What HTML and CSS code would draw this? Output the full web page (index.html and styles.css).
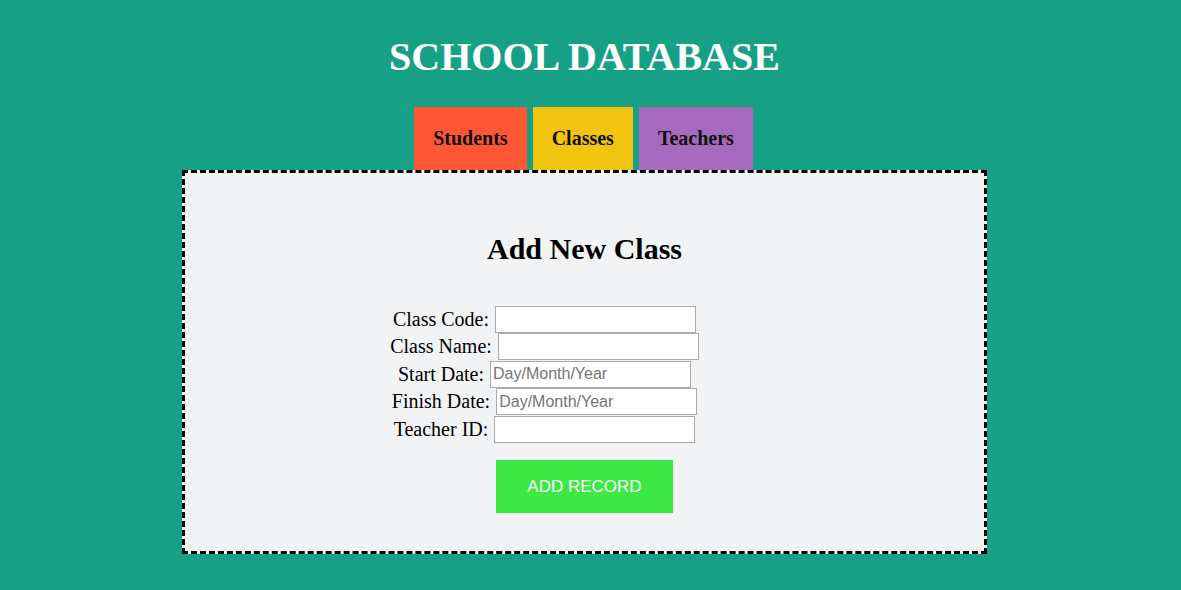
FILE: index.html
```html
<!DOCTYPE html>
<html>
<head>
<meta charset="utf-8">
<title>School Database</title>
<link rel="stylesheet" href="styles.css">
</head>
<body>
<div class="page">
  <h1 class="title">SCHOOL DATABASE</h1>
  <nav class="tabs">
    <a class="tab tab-students">Students</a>
    <a class="tab tab-classes">Classes</a>
    <a class="tab tab-teachers">Teachers</a>
  </nav>
  <section class="panel">
    <h2 class="panel-title">Add New Class</h2>
    <form class="form">
      <div class="row"><label>Class Code:</label><input type="text"></div>
      <div class="row"><label>Class Name:</label><input type="text"></div>
      <div class="row"><label>Start Date:</label><input type="text" placeholder="Day/Month/Year"></div>
      <div class="row"><label>Finish Date:</label><input type="text" placeholder="Day/Month/Year"></div>
      <div class="row"><label>Teacher ID:</label><input type="text"></div>
      <div class="actions"><button type="button" class="btn">ADD RECORD</button></div>
    </form>
  </section>
</div>
</body>
</html>
```
FILE: styles.css
```css
html, body {
  margin: 0;
  padding: 0;
}
body {
  background: #16a085;
  font-family: "Liberation Serif", "Times New Roman", serif;
  color: #000;
}
.page {
  padding-right: 12px;
}
.title {
  margin: 33px 0 27px;
  text-align: center;
  color: #fff;
  font-size: 40px;
  font-weight: bold;
}
.tabs {
  display: flex;
  justify-content: center;
  gap: 6px;
  padding-right: 2px;
}
.tab {
  display: block;
  padding: 20px 19px;
  font-size: 20px;
  font-weight: bold;
  color: #111;
}
.tab-students { background: #ff5733; }
.tab-classes { background: #f1c40f; }
.tab-teachers { background: #a569bd; }
.panel {
  box-sizing: border-box;
  width: 805px;
  margin: 0 auto;
  border: 3px dashed #000;
  background: #f2f3f4;
  padding: 37px 0 38px;
}
.panel-title {
  margin: 22px 0 39.5px;
  text-align: center;
  font-size: 30px;
  font-weight: bold;
}
.form {
  display: flex;
  flex-direction: column;
}
.row {
  display: flex;
  justify-content: center;
  align-items: center;
  gap: 6px;
  height: 27.5px;
  padding-right: 80px;
  font-size: 20px;
}
.row input {
  box-sizing: border-box;
  width: 201px;
  height: 27px;
  margin: 0;
  padding: 1px 2px;
  border: 1px solid #ababab;
  background: #fff;
  font-family: "Liberation Sans", Arial, sans-serif;
  font-size: 16px;
}
.row input::placeholder {
  color: #757575;
}
.actions {
  display: flex;
  justify-content: center;
  margin-top: 17px;
}
.btn {
  width: 177px;
  height: 53px;
  border: none;
  background: #3de844;
  color: #fff;
  font-family: "Liberation Sans", Arial, sans-serif;
  font-size: 17px;
  cursor: pointer;
}
```
